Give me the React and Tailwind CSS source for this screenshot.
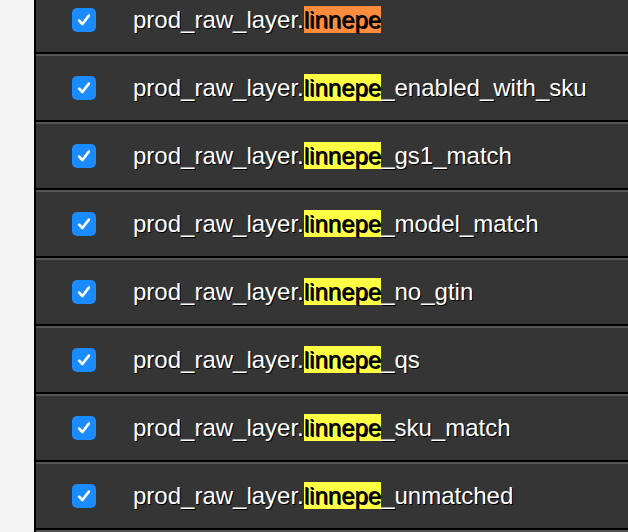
import React from "react";

const rows = [
  { suffix: "", active: true },
  { suffix: "_enabled_with_sku" },
  { suffix: "_gs1_match" },
  { suffix: "_model_match" },
  { suffix: "_no_gtin" },
  { suffix: "_qs" },
  { suffix: "_sku_match" },
  { suffix: "_unmatched" },
];

function Check() {
  return (
    <div className="w-[24px] h-[24px] rounded-[5px] bg-[#1a8cff] flex items-center justify-center shrink-0">
      <svg width="16" height="16" viewBox="0 0 16 16" fill="none">
        <path d="M3.2 8.6 L6.4 12 L12.8 3.6" stroke="white" strokeWidth="2.6" strokeLinecap="round" strokeLinejoin="round" />
      </svg>
    </div>
  );
}

export default function App() {
  return (
    <div className="w-[628px] h-[532px] overflow-hidden bg-[#f3f3f3] flex">
      <div className="ml-[34px] flex-1 border-l-2 border-black -mt-[14px] flex flex-col">
        {rows.map((r, i) => (
          <div
            key={i}
            className="shrink-0 h-[68px] border-t-2 border-t-[#555555] border-b-2 border-b-black bg-[#353535] flex items-center pl-[36px]"
          >
            <Check />
            <div
              className="ml-[37px] mb-[2px] text-white text-[24px] leading-[27px] whitespace-nowrap [text-shadow:1px_1px_0_#000]"
              style={{ fontFamily: '"Liberation Sans", Arial, sans-serif' }}
            >
              prod_raw_layer.
              <span className={r.active ? "bg-[#ff8c3c] text-black" : "bg-[#ffff44] text-black"}>linnepe</span>
              {r.suffix}
            </div>
          </div>
        ))}
        <div className="shrink-0 h-[68px] border-t-2 border-t-[#555555] bg-[#353535]" />
      </div>
    </div>
  );
}
